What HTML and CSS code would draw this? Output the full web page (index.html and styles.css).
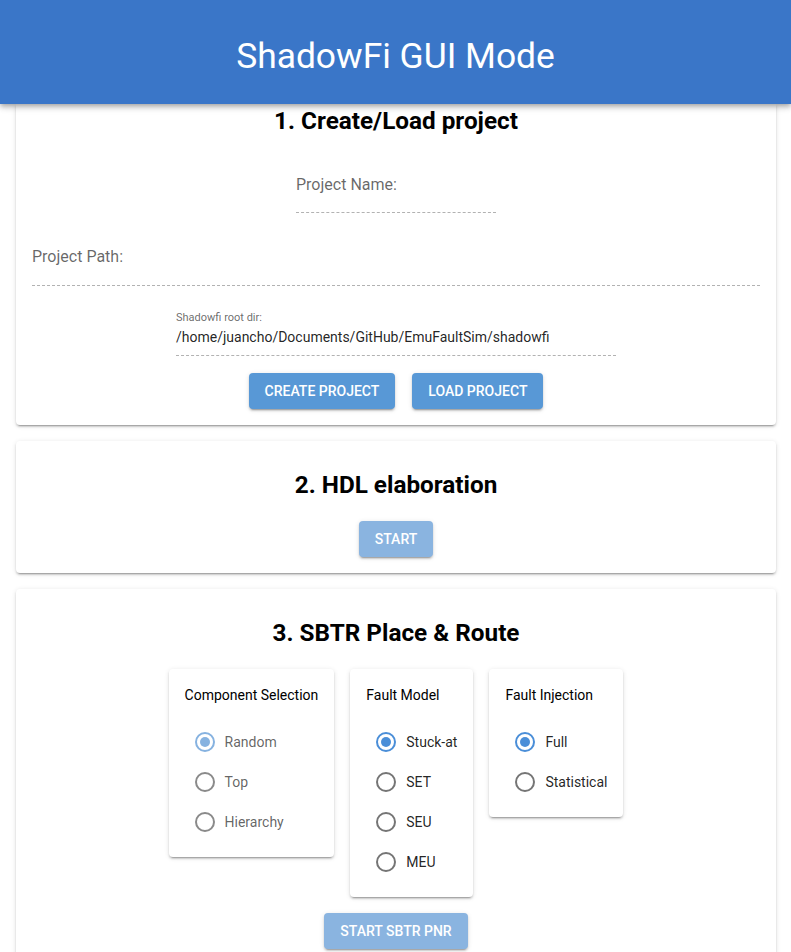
FILE: index.html
```html
<!DOCTYPE html>
<html lang="en">
<head>
    <meta charset="UTF-8">
    <meta name="viewport" content="width=device-width, initial-scale=1.0">
    <title>ShadowFi GUI Mode</title>
    <link rel="stylesheet" href="styles.css">
</head>
<body>
    <header class="app-bar">
        <h1>ShadowFi GUI Mode</h1>
    </header>

    <main class="content">
        <!-- step 1 -->
        <section class="card card-first">
            <h2>1. Create/Load project</h2>

            <div class="field field-name">
                <label>Project Name:</label>
                <div class="field-input"></div>
            </div>

            <div class="field field-path">
                <label>Project Path:</label>
                <div class="field-input"></div>
            </div>

            <div class="field field-root">
                <label class="small">Shadowfi root dir:</label>
                <div class="field-value">/home/juancho/Documents/GitHub/EmuFaultSim/shadowfi</div>
            </div>

            <div class="actions">
                <button class="btn">Create Project</button>
                <button class="btn">Load Project</button>
            </div>
        </section>

        <!-- step 2 -->
        <section class="card">
            <h2>2. HDL elaboration</h2>
            <div class="actions">
                <button class="btn" disabled>Start</button>
            </div>
        </section>

        <!-- step 3 -->
        <section class="card">
            <h2>3. SBTR Place &amp; Route</h2>

            <div class="options">
                <div class="option-card disabled">
                    <h4>Component Selection</h4>
                    <div class="radio checked"><span class="dot"></span>Random</div>
                    <div class="radio"><span class="dot"></span>Top</div>
                    <div class="radio"><span class="dot"></span>Hierarchy</div>
                </div>

                <div class="option-card">
                    <h4>Fault Model</h4>
                    <div class="radio checked"><span class="dot"></span>Stuck-at</div>
                    <div class="radio"><span class="dot"></span>SET</div>
                    <div class="radio"><span class="dot"></span>SEU</div>
                    <div class="radio"><span class="dot"></span>MEU</div>
                </div>

                <div class="option-card">
                    <h4>Fault Injection</h4>
                    <div class="radio checked"><span class="dot"></span>Full</div>
                    <div class="radio"><span class="dot"></span>Statistical</div>
                </div>
            </div>

            <div class="actions">
                <button class="btn" disabled>Start SBTR PNR</button>
            </div>
        </section>
    </main>
</body>
</html>
```

FILE: styles.css
```css
body {
    margin: 0;
    font-family: Roboto, "Liberation Sans", Arial, sans-serif;
    color: rgba(0, 0, 0, 0.87);
    background: #fff;
}
.app-bar {
    position: relative;
    z-index: 2;
    height: 104px;
    display: flex;
    align-items: center;
    justify-content: center;
    background-color: #3a76c8;
    box-shadow: 0 2px 4px -1px rgba(0, 0, 0, 0.2), 0 4px 5px 0 rgba(0, 0, 0, 0.14), 0 1px 10px 0 rgba(0, 0, 0, 0.12);
}
.app-bar h1 {
    margin: 8px 0 0;
    font-size: 35.4px;
    font-weight: 400;
    color: #fff;
}
.content {
    display: flex;
    flex-direction: column;
    gap: 16px;
    padding: 0 15px 16px 16px;
}
.card {
    background: #fff;
    border-radius: 4px;
    padding: 28px 16px 16px;
    display: flex;
    flex-direction: column;
    align-items: center;
    box-shadow: 0 3px 1px -2px rgba(0, 0, 0, 0.2), 0 2px 2px 0 rgba(0, 0, 0, 0.14), 0 1px 5px 0 rgba(0, 0, 0, 0.12);
}
.card-first {
    padding-top: 1px;
    padding-bottom: 16px;
    border-top-left-radius: 0;
    border-top-right-radius: 0;
}
.card h2 {
    margin: 0 0 20px;
    font-size: 24.3px;
    line-height: 32px;
    font-weight: 700;
    color: #000;
}
.card-first h2 {
    margin-bottom: 38px;
}
.field {
    display: flex;
    flex-direction: column;
}
.field label {
    font-size: 16px;
    line-height: 20px;
    color: rgba(0, 0, 0, 0.6);
}
.field-input {
    height: 17px;
    border-bottom: 1px dashed rgba(0, 0, 0, 0.3);
}
.field-name {
    width: 200px;
}
.field-path {
    align-self: stretch;
    margin-top: 34px;
}
.field-path .field-input {
    height: 18px;
}
.field-root {
    width: 440px;
    margin-top: 25px;
}
.field label.small {
    font-size: 11px;
    line-height: 14px;
}
.field-value {
    margin-top: 2px;
    font-size: 14px;
    line-height: 20px;
    padding-bottom: 8px;
    border-bottom: 1px dashed rgba(0, 0, 0, 0.3);
    color: rgba(0, 0, 0, 0.87);
}
.actions {
    display: flex;
    justify-content: center;
    gap: 17px;
}
.field-root + .actions {
    margin-top: 17px;
}
.btn {
    height: 36px;
    padding: 0 16px;
    border: none;
    border-radius: 4px;
    background-color: #5898d6;
    color: #fff;
    font-family: inherit;
    font-size: 14px;
    font-weight: 500;
    letter-spacing: 0;
    text-transform: uppercase;
    cursor: pointer;
    box-shadow: 0 3px 1px -2px rgba(0, 0, 0, 0.2), 0 2px 2px 0 rgba(0, 0, 0, 0.14), 0 1px 5px 0 rgba(0, 0, 0, 0.12);
}
.btn:disabled {
    background-color: #8ab4e0;
    cursor: default;
}
.options {
    display: flex;
    align-items: flex-start;
    gap: 16px;
    margin-bottom: 16px;
}
.option-card {
    padding: 18px 16px 15px;
    border-radius: 4px;
    background: #fff;
    box-shadow: 0 3px 1px -2px rgba(0, 0, 0, 0.2), 0 2px 2px 0 rgba(0, 0, 0, 0.14), 0 1px 5px 0 rgba(0, 0, 0, 0.12);
}
.option-card h4 {
    margin: 0 0 19px;
    font-size: 14px;
    line-height: 16px;
    font-weight: 400;
    color: #000;
}
.radio {
    height: 40px;
    display: flex;
    align-items: center;
    gap: 10px;
    padding-left: 10px;
    font-size: 14px;
    color: rgba(0, 0, 0, 0.87);
}
.radio .dot {
    box-sizing: border-box;
    width: 20px;
    height: 20px;
    border: 2px solid #757575;
    border-radius: 50%;
    display: flex;
    align-items: center;
    justify-content: center;
}
.radio.checked .dot {
    border-color: #4a8ed8;
}
.radio.checked .dot::after {
    content: "";
    width: 10px;
    height: 10px;
    border-radius: 50%;
    background: #4a8ed8;
}
.option-card.disabled .radio {
    color: rgba(0, 0, 0, 0.62);
}
.option-card.disabled .radio .dot {
    border-color: #8a8a8a;
}
.option-card.disabled .radio.checked .dot {
    border-color: #86b2e0;
}
.option-card.disabled .radio.checked .dot::after {
    background: #86b2e0;
}
```
